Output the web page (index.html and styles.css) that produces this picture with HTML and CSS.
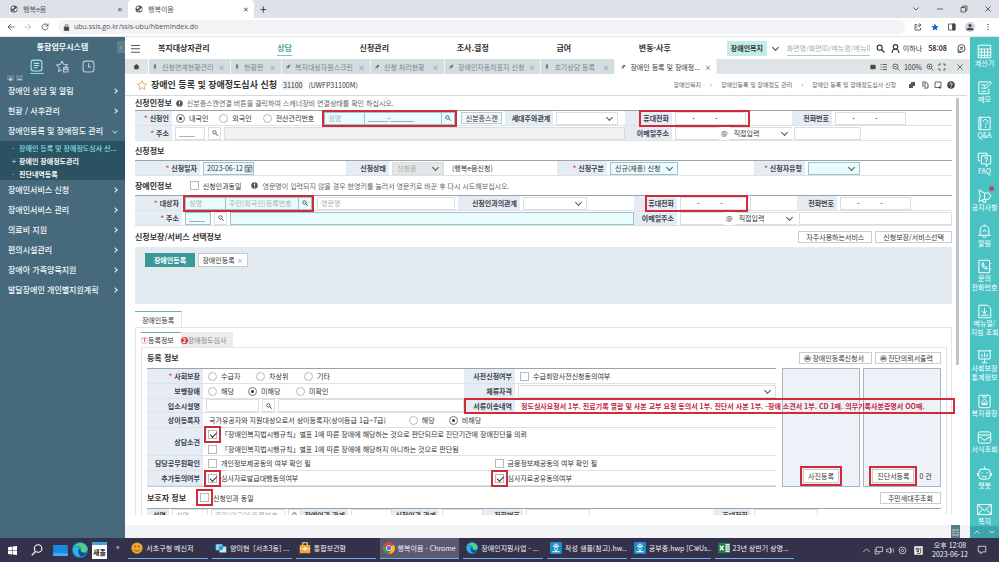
FILE: index.html
```html
<!DOCTYPE html>
<html lang="ko">
<head>
<meta charset="utf-8">
<title>행복이음</title>
<link rel="stylesheet" href="styles.css">
</head>
<body>
<svg class="defs" aria-hidden="true">
  <symbol id="globe" viewBox="0 0 16 16"><circle cx="8" cy="8" r="7" fill="#4d5156"/><path d="M3 5l3-2 3 1-2 3-3 1zM9 9l4-3 1 3-3 4-2-1zM4 11l3 0 0 3z" fill="#fff"/></symbol>
  <symbol id="search" viewBox="0 0 16 16"><circle cx="6.5" cy="6.5" r="4.5" fill="none" stroke="currentColor" stroke-width="2"/><path d="M10 10l5 5" stroke="currentColor" stroke-width="2.4"/></symbol>
  <symbol id="pin" viewBox="0 0 16 16"><path d="M5 1h6v2l-1 1v3l3 3H3l3-3V4L5 3z" fill="currentColor"/><path d="M8 10v5" stroke="currentColor" stroke-width="1.6"/></symbol>
  <symbol id="info" viewBox="0 0 16 16"><circle cx="8" cy="8" r="7.5" fill="#555"/><path d="M8 3v6M8 11v2" stroke="#fff" stroke-width="2.2"/></symbol>
  <symbol id="print" viewBox="0 0 16 16"><circle cx="8" cy="8" r="7" fill="none" stroke="#666" stroke-width="1.5"/><path d="M5 4h6v3H5zM3 7h10v4H3z" fill="#666"/></symbol>
  <symbol id="edge" viewBox="0 0 16 16"><circle cx="8" cy="8" r="8" fill="#1878c8"/><path d="M1 6C3 0 13-1 15.500 6c.5 3-2 5-5 4.500C8 10 9 8 9 7 8 3 3 3 1 6z" fill="#4fd08b"/><path d="M1 6c2-2 6-2 7 0-3 1-3 6 1 8-4 2-9-2-8-8z" fill="#2cb5e0"/><path d="M8 7c0 2 1 4 6 4-1 2-3 3-5 3-3-2-3-5-1-7z" fill="#134d8f"/></symbol>
</svg>

<header class="browser">
  <div class="tabstrip">
    <div class="btab"><svg><use href="#globe"/></svg><span>행복e음</span><button aria-label="탭 닫기">✕</button></div>
    <div class="btab on"><svg><use href="#globe"/></svg><span>행복이음</span><button aria-label="탭 닫기">✕</button></div>
    <button class="plus" aria-label="새 탭">+</button>
    <div class="wincontrols">
      <svg viewBox="0 0 16 16"><path d="M3 5l5 5 5-5"/></svg>
      <svg viewBox="0 0 16 16"><path d="M2 8h12"/></svg>
      <svg viewBox="0 0 16 16"><path d="M2 5h9v9H2zM5 5V2h9v9h-3"/></svg>
      <svg viewBox="0 0 16 16"><path d="M3 3l10 10M13 3L3 13"/></svg>
    </div>
  </div>
  <div class="toolbar">
    <svg viewBox="0 0 16 16"><path d="M15 8H2M8 2L2 8l6 6"/></svg>
    <svg class="dim" viewBox="0 0 16 16"><path d="M1 8h13M8 2l6 6-6 6"/></svg>
    <svg viewBox="0 0 16 16"><path d="M13 4.500A6 6 0 1 0 14 9M14 1v5H9"/></svg>
    <label class="omni"><svg viewBox="0 0 16 16"><path d="M3 7h10v8H3z" fill="#444"/><path d="M5 7V4a3 3 0 0 1 6 0v3"/></svg><input aria-label="주소창" value="ubu.ssis.go.kr/ssis-ubu/hbemIndex.do"></label>
    <svg viewBox="0 0 16 16"><path d="M6 3H2v11h11v-4M5 10c0-4 3-6 8-6M10 1l4 3-4 4"/></svg>
    <svg viewBox="0 0 16 16"><path class="star" d="M8 1l2.200 4.800 5 .6-3.700 3.500 1 5.100L8 12.500 3.500 15l1-5.100L.8 6.400l5-.6z"/></svg>
    <svg viewBox="0 0 16 16"><path d="M1 2h13v12H1z"/><path d="M9 2h5v12H9z" fill="#444"/></svg>
    <svg class="avatar" viewBox="0 0 16 16"><circle cx="8" cy="5.500" r="2.500" fill="#444"/><path d="M2 13c1-5 11-5 12 0z" fill="#444"/></svg>
    <svg viewBox="0 0 16 16"><path d="M8 2v2M8 7v2M8 12v2" stroke-width="2.500"/></svg>
  </div>
</header>

<div class="app">
  <aside class="side">
    <button class="fold" aria-label="메뉴 접기">‹</button>
    <h1>통합업무시스템</h1>
    <div class="modes">
      <button class="on" aria-label="메뉴"><svg viewBox="0 0 24 24"><rect x="2" y="2" width="20" height="20" rx="5"/><path d="M7 8h10M7 12h10M7 16h7"/></svg></button>
      <button aria-label="즐겨찾기"><svg viewBox="0 0 24 24"><path d="M11 2l3 6 7 1-4 4M11 2L8 8l-7 1 5 5-1 7 6-3M14 14h8v8h-8zM14 17h8"/></svg></button>
      <button aria-label="최근"><svg viewBox="0 0 24 24"><rect x="2" y="2" width="20" height="20" rx="5"/><path d="M12 6v7h5"/></svg></button>
    </div>
    <div class="expand"><button aria-label="모두 펼치기">+</button><button aria-label="모두 접기">−</button></div>
    <nav>
      <a href="#">장애인 상담 및 알림<i></i></a>
      <a href="#">현황 / 사후관리<i></i></a>
      <a href="#" class="open">장애인등록 및 장애정도 관리<i></i></a>
      <div class="sub">
        <a href="#" class="on">장애인 등록 및 장애정도심사 신...</a>
        <a href="#" class="more">장애인 장애정도관리</a>
        <a href="#">진단내역등록</a>
      </div>
      <a href="#">장애인서비스 신청<i></i></a>
      <a href="#">장애인서비스 관리<i></i></a>
      <a href="#">의료비 지원<i></i></a>
      <a href="#">편의시설관리<i></i></a>
      <a href="#">장애아 가족양육지원<i></i></a>
      <a href="#">발달장애인 개인별지원계획<i></i></a>
    </nav>
  </aside>

  <main>
    <div class="topnav">
      <button class="burger" aria-label="전체 메뉴"><svg viewBox="0 0 16 16"><path d="M0 2.500h16M0 8.500h16M0 14.500h16"/></svg></button>
      <nav><a href="#">복지대상자관리</a><a href="#" class="on">상담</a><a href="#">신청관리</a><a href="#">조사.결정</a><a href="#">급여</a><a href="#">변동·사후</a></nav>
      <div class="tools">
        <button class="badge">장애인복지</button><i class="chev"></i>
        <input class="find" aria-label="화면 검색" placeholder="화면명/화면ID/메뉴명/메뉴ID">
        <svg><use href="#search"/></svg>
        <svg viewBox="0 0 16 16"><circle cx="8" cy="5" r="4" fill="none" stroke="#333" stroke-width="2"/><path d="M2 16c0-9 12-9 12 0" fill="none" stroke="#333" stroke-width="2"/></svg>
        <span>이하나</span><b>58:08</b>
        <svg class="chat" viewBox="0 0 16 16"><circle cx="8" cy="7.500" r="6.500" fill="none" stroke="#444" stroke-width="1.600"/><path d="M2 10v5h6M5 6h6M5 9h6" fill="none" stroke="#444" stroke-width="1.600"/></svg>
      </div>
    </div>

    <div class="doctabs">
      <button class="home" aria-label="홈"><svg viewBox="0 0 16 16"><path d="M1 8l7-6 7 6h-2v6H3V8z" fill="#444"/></svg></button>
      <div class="t w1"><svg><use href="#pin"/></svg><span>신청연계현황관리</span><em>×</em></div>
      <div class="t w2"><svg><use href="#pin"/></svg><span>현황판</span><em>×</em></div>
      <div class="t w3"><svg class="tilt"><use href="#pin"/></svg><span>복지대상자원스크린</span><em>×</em></div>
      <div class="t w4"><svg class="tilt"><use href="#pin"/></svg><span>신청 처리현황</span><em>×</em></div>
      <div class="t w5"><svg class="tilt"><use href="#pin"/></svg><span>장애인자동차표지 신청</span><em>×</em></div>
      <div class="t w4"><svg><use href="#pin"/></svg><span>초기상담 등록</span><em>×</em></div>
      <div class="t w6 on"><svg class="tilt"><use href="#pin"/></svg><span>장애인 등록 및 장애정...</span><em>×</em></div>
      <div class="view">
        <svg viewBox="0 0 16 16"><path d="M2 3h12v10H2z" fill="#444"/></svg>
        <svg viewBox="0 0 16 16"><path d="M5 3h9M5 8h9M5 13h9M1 3h2M1 8h2M1 13h2"/></svg>
        <svg viewBox="0 0 16 16"><circle cx="7" cy="7" r="5"/><path d="M11 11l4 4M5 7h4"/></svg>
        <span>100%</span>
        <svg viewBox="0 0 16 16"><circle cx="7" cy="7" r="5"/><path d="M11 11l4 4M5 7h4M7 5v4"/></svg>
        <svg viewBox="0 0 16 16"><path d="M2 6V2h4M10 2h4v4M14 10v4h-4M6 14H2v-4"/></svg>
        <svg viewBox="0 0 16 16"><path d="M3 3l10 10M13 3L3 13"/></svg>
      </div>
    </div>

    <div class="titlebar">
      <svg class="fav" viewBox="0 0 16 16"><path d="M8 1l2.200 4.800 5 .6-3.700 3.500 1 5.100L8 12.500 3.500 15l1-5.100L.8 6.400l5-.6z" fill="none" stroke="#d8a35a" stroke-width="1.300"/></svg>
      <h2>장애인 등록 및 장애정도심사 신청</h2><span class="code">31100</span><span class="pid">(UWFP31100M)</span>
      <div class="crumbs"><a href="#">장애인복지</a><i>›</i><a href="#">장애인등록 및 장애정도 관리</a><i>›</i><a href="#">장애인 등록 및 장애정도심사 신청</a></div>
      <div class="acts">
        <svg viewBox="0 0 16 16"><path d="M2 6h8v8H2zM6 2h8v8h-4V6H6z" fill="#555"/></svg>
        <svg viewBox="0 0 16 16"><path d="M2 2h8l4 4v8H6M2 6h8M2 10h8" fill="none" stroke="#444" stroke-width="1.800"/></svg>
        <svg viewBox="0 0 16 16"><path d="M2 2h12v11H2zM9 13l3-2v4z" fill="none" stroke="#444" stroke-width="1.600"/></svg>
        <svg viewBox="0 0 16 16"><circle cx="8" cy="8" r="7.500" fill="#444"/><path d="M5.500 6.500c0-4 5-3 5-.5 0 2-2.500 2-2.500 4M8 11.500v2" fill="none" stroke="#fff" stroke-width="1.700"/></svg>
      </div>
    </div>

    <div class="scroller">
      <div class="page">
        <div class="head h14"><h3>신청인정보</h3><svg class="ic"><use href="#info"/></svg><small>신분증스캔연결 버튼을 클릭하여 스캐너장비 연결상태를 확인 하십시오.</small></div>
        <section class="form f1">
          <span class="lb req">신청인</span>
          <div class="fd">
            <label class="op"><input type="radio" name="who" checked>내국인</label>
            <label class="op"><input type="radio" name="who">외국인</label>
            <label class="op"><input type="radio" name="who">전산관리번호</label>
            <div class="pair mark"><input class="need nm" aria-label="성명" placeholder="성명"><input class="need grow" aria-label="등록번호" value="_____-______"><button class="glass" aria-label="검색"><svg><use href="#search"/></svg></button></div>
            <button class="btn scan">신분증스캔</button>
            <label class="lb rel" for="rel1">세대주와관계</label>
            <span class="sel s60"><select id="rel1"><option></option></select></span>
          </div>
          <div class="lb phone"><label for="hp1">휴대전화</label></div>
          <div class="fd">
            <input id="hp1" class="tel hp" value="-         -"><div class="ring r1"></div>
            <label class="lb tl" for="tel1">전화번호</label><input id="tel1" class="tel t2" value="-         -">
          </div>
          <label class="lb req" for="zip1">주소</label>
          <div class="fd"><input id="zip1" class="zip" value="____"><button class="glass box" aria-label="주소 검색"><svg><use href="#search"/></svg></button><input class="grow off" aria-label="상세 주소"></div>
          <label class="lb" for="em1">이메일주소</label>
          <div class="fd tight"><input id="em1" class="em"><span>@</span><span class="sel s60"><select aria-label="이메일 도메인"><option>직접입력</option></select></span><input class="dom1" aria-label="도메인"></div>
        </section>

        <div class="head h19"><h3>신청정보</h3></div>
        <section class="form f2">
          <label class="lb req" for="date">신청일자</label>
          <div class="fd"><span class="date"><input id="date" value="2023-06-12"><svg viewBox="0 0 16 16"><path d="M2 3h12v11H2zM2 6h12M5 1v3M11 1v3M4 9h8M4 12h8M8 6v8" fill="none" stroke="#555" stroke-width="1.200"/></svg></span></div>
          <label class="lb" for="state">신청상태</label>
          <div class="fd"><span class="sel s52 dis"><select id="state" disabled><option>신청중</option></select></span><span class="note">(행복e음신청)</span></div>
          <label class="lb req" for="kind">신청구분</label>
          <div class="fd"><span class="sel s68 need"><select id="kind"><option>신규(재증) 신청</option></select></span></div>
          <label class="lb req" for="type">신청자유형</label>
          <div class="fd"><span class="sel s52 need"><select id="type"><option></option></select></span></div>
        </section>

        <div class="head h19"><h3>장애인정보</h3><label class="op same"><input type="checkbox">신청인과동일</label><svg class="ic"><use href="#info"/></svg><small>영문명이 입력되지 않을 경우 한영키를 눌러서 영문키로 바꾼 후 다시 시도해보십시오.</small></div>
        <section class="form f3">
          <span class="lb req">대상자</span>
          <div class="fd">
            <div class="pair mark p3"><input class="need nm" aria-label="성명" placeholder="성명"><input class="need grow" aria-label="주민등록번호" placeholder="주민(외국인)등록번호"><button class="glass" aria-label="검색"><svg><use href="#search"/></svg></button></div>
            <input class="eng" aria-label="영문명" placeholder="영문명">
            <label class="lb rel3" for="rel3">신청인과의관계</label><span class="sel s64"><select id="rel3"><option></option></select></span>
          </div>
          <div class="lb phone"><label for="hp3">휴대전화</label></div>
          <div class="fd"><input id="hp3" class="tel hp" value="-         -"><div class="ring r3"></div>
            <label class="lb tl" for="tel3">전화번호</label><input id="tel3" class="tel t2" value="-         -"></div>
          <label class="lb req" for="zip3">주소</label>
          <div class="fd"><input id="zip3" class="zip need" value="____"><button class="glass box" aria-label="주소 검색"><svg><use href="#search"/></svg></button><input class="grow need" aria-label="상세 주소"></div>
          <label class="lb" for="em3">이메일주소</label>
          <div class="fd tight"><input id="em3" class="em"><span>@</span><span class="sel s60"><select aria-label="이메일 도메인"><option>직접입력</option></select></span><input class="grow" aria-label="도메인"></div>
        </section>

        <div class="head h21"><h3>신청보장/서비스 선택정보</h3><div class="right"><button class="btn">자주사용하는서비스</button><button class="btn">신청보장/서비스선택</button></div></div>
        <div class="picked"><button class="main">장애인등록</button><button class="chip">장애인등록 <em>×</em></button></div>

        <div class="outer-tabs"><button>장애인등록</button></div>
        <div class="outer">
          <div class="inner-tabs"><button class="on"><i>①</i>등록정보</button><button><i class="fill">2</i>장애정도심사</button></div>
          <div class="inner">
            <div class="head h20"><h3>등록 정보</h3><div class="right"><button class="btn"><svg><use href="#print"/></svg>장애인등록신청서</button><button class="btn"><svg><use href="#print"/></svg>진단의뢰서출력</button></div></div>
            <div class="split">
              <section class="form reg">
                <span class="lb req">사회보장</span>
                <div class="fd"><label class="op w"><input type="radio" name="a">수급자</label><label class="op w"><input type="radio" name="a">차상위</label><label class="op"><input type="radio" name="a">기타</label></div>
                <span class="lb">사전신청여부</span>
                <div class="fd"><label class="op"><input type="checkbox">수급희망사전신청동의여부</label></div>
                <span class="lb">보행장애</span>
                <div class="fd"><label class="op v"><input type="radio" name="b">해당</label><label class="op w"><input type="radio" name="b" checked>미해당</label><label class="op"><input type="radio" name="b">미확인</label></div>
                <label class="lb" for="stay">체류자격</label>
                <div class="fd"><span class="sel grow"><select id="stay"><option></option></select></span></div>
                <label class="lb" for="fac">입소시설명</label>
                <div class="fd"><input id="fac" class="fac"><button class="glass box" aria-label="시설 검색"><svg><use href="#search"/></svg></button><input class="grow" aria-label="시설명"></div>
                <span class="lb">서류이송내역</span>
                <div class="fd"><b class="sent">정도심사요청서 1부. 진료기록 열람 및 사본 교부 요청 동의서 1부. 진단서 사본 1부. -장애 소견서 1부. CD 1매. 의무기록사본증명서 OO매.</b><div class="ring rs"></div></div>
                <span class="lb">상이등록자</span>
                <div class="fd all"><span class="vet">국가유공자와 지원대상으로서 상이등록자(상이등급 1급~7급)</span><label class="op v"><input type="radio" name="c">해당</label><label class="op"><input type="radio" name="c" checked>비해당</label></div>
                <span class="lb">상담소견</span>
                <div class="fd all two"><label class="op"><input class="hot" type="checkbox" checked>「장애인복지법시행규칙」별표 1에 따른 장애에 해당하는 것으로 판단되므로 진단기관에 장애진단을 의뢰</label><label class="op"><input type="checkbox">「장애인복지법시행규칙」별표 1에 따른 장애에 해당하지 아니하는 것으로 판단됨</label></div>
                <span class="lb">담당공무원확인</span>
                <div class="fd all halves"><label class="op"><input type="checkbox">개인정보제공동의 여부 확인 필</label><label class="op"><input type="checkbox">금융정보제공동의 여부 확인 필</label></div>
                <span class="lb">추가동의여부</span>
                <div class="fd all halves"><label class="op"><input class="hot" type="checkbox" checked>심사자료발급대행동의여부</label><label class="op"><input class="hot" type="checkbox" checked>심사자료공유동의여부</label></div>
              </section>
              <div class="drop"><button class="btn mark">사진등록</button></div>
              <div class="drop"><button class="btn mark">진단서등록</button><span>0 건</span></div>
            </div>
            <div class="head h21"><h3>보호자 정보</h3><label class="op guard"><input class="hot" type="checkbox">신청인과 동일</label><div class="right"><button class="btn">주민세대주조회</button></div></div>
            <section class="form care">
              <span class="lb">성명</span><div class="fd"><input class="nm" aria-label="보호자 성명" placeholder="성명"><input class="grow" aria-label="보호자 등록번호" placeholder="주민(외국인)등록번호"><button class="glass" aria-label="검색"><svg><use href="#search"/></svg></button></div>
              <label class="lb" for="g1">장애인과 관계</label><div class="fd"><input class="grow" id="g1"></div>
              <label class="lb" for="g2">신청인과 관계</label><div class="fd"><input class="grow" id="g2"></div>
              <label class="lb" for="g3">전화번호</label><div class="fd"><input class="c64" id="g3"></div>
              <label class="lb" for="g4">휴대전화</label><div class="fd"><input class="c64" id="g4"></div>
            </section>
          </div>
        </div>
      </div>
      <div class="track"><div class="thumb"></div></div>
    </div>
    <div class="foot"><button aria-label="창 목록">▤</button></div>
  </main>

  <aside class="rail">
    <div class="items">
      <a href="#"><svg viewBox="0 0 24 24"><path d="M2 2h20v20H2zM2 8h20M7 8v14M12 8v14M17 8v14M2 13h20M2 18h20"/></svg>계산기</a>
      <a href="#"><svg viewBox="0 0 24 24"><path d="M18 3H3v19h16v-8M7 8h6M7 13h4M7 18h8M12 14l1-4 8-8 2 3-8 8z"/></svg>메모</a>
      <a href="#"><svg viewBox="0 0 24 24"><path d="M3 2h18v20H3zM6 2v20M10 9c0-5 7-4 7 0 0 2-3 2-3 5M14 16v3"/></svg>Q&amp;A</a>
      <a href="#"><svg viewBox="0 0 24 24"><path d="M5 14H2V2h14v4M7 6h15v13h-4l-3 4v-4H7zM12 11c0-3 5-3 5 0l-2 2v3"/></svg>FAQ</a>
      <a href="#" class="new"><svg viewBox="0 0 24 24"><path d="M3 3l9 5h7l3 5-3 5h-7l-9 4 2-9zM12 8v10M9 18l1 5h4v-5"/></svg>공지사항</a>
      <a href="#"><svg viewBox="0 0 24 24"><path d="M2 18h20M5 18v-8c0-10 14-10 14 0v8M9 18c0 5 6 5 6 0M12 1v3M9 13l3-4 3 4"/></svg>알림</a>
      <a href="#"><svg viewBox="0 0 24 24"><path d="M3 2h17v20H3zM20 7h3M20 16h3"/><path d="M8 7c0 6 3 9 8 9v-3l-3-1-1 1-2-3 1-1-1-3z"/></svg>문의<br>전화번호</a>
      <a href="#"><svg viewBox="0 0 24 24"><path d="M3 2h14l5 5v15H3zM12 6v9M8 11l4 4 4-4M7 18h11"/></svg>메뉴얼/<br>지침 조회</a>
      <a href="#"><svg viewBox="0 0 24 24"><path d="M1 3h22M3 3v13h18V3M12 16v6M8 22h8M8 8v5M12 6v7M16 8v5"/></svg>사회보장<br>통계정보</a>
      <a href="#"><svg viewBox="0 0 24 24"><rect x="3" y="2" width="18" height="20" rx="2"/><path d="M8 5h8M12 8l-4 4v5h8v-5zM11 17v-3h2v3"/></svg>복지광장</a>
      <a href="#"><svg viewBox="0 0 24 24"><rect x="2" y="3" width="20" height="18" rx="3"/><path d="M2 8h20M2 12h5l3 4h4l3-4h5"/></svg>서식조회</a>
      <a href="#"><svg viewBox="0 0 24 24"><rect x="3" y="5" width="18" height="16" rx="5"/><path d="M12 1v4M1 11v5M23 11v5M8 10v2M16 10v2M8 16c2 2 6 2 8 0"/></svg>챗봇</a>
      <a href="#"><svg viewBox="0 0 24 24"><path d="M1 4h22v16H1zM1 4l11 10L23 4M1 20l8-8M23 20l-8-8"/></svg>쪽지</a>
    </div>
    <div class="updown"><button aria-label="위로"><svg viewBox="0 0 16 16"><path d="M3 11l5-5 5 5"/></svg></button><button aria-label="아래로"><svg viewBox="0 0 16 16"><path d="M3 5l5 5 5-5"/></svg></button></div>
  </aside>
</div>

<footer class="taskbar">
  <svg class="win" viewBox="0 0 16 16"><path d="M0 2l7-1v6.500H0zM8 1l8-1v7.500H8zM0 8.500h7V15l-7-1zM8 8.500h8V16l-8-1z" fill="#fff"/></svg>
  <svg class="q" viewBox="0 0 16 16"><circle cx="9.500" cy="6" r="5" fill="none" stroke="#fff" stroke-width="1.500"/><path d="M6 10l-5 5" stroke="#fff" stroke-width="1.500"/></svg>
  <svg class="desk" viewBox="0 0 16 12"><path d="M0 0h16v12H0z" fill="#1b8be0"/><path d="M0 9h16v3H0z" fill="#45aef5"/></svg>
  <svg class="e"><use href="#edge"/></svg>
  <span class="sae">새올</span><span class="mo">»</span>
  <div class="tasks">
    <button><svg viewBox="0 0 16 16"><circle cx="8" cy="8" r="7.500" fill="#eda52e"/><circle cx="5.500" cy="6" r="1" fill="#543"/><circle cx="10.500" cy="6" r="1" fill="#543"/><path d="M4 10c2 3 6 3 8 0" stroke="#543" fill="none"/></svg><span>서초구청 메신저</span></button>
    <button><svg viewBox="0 0 16 16"><path d="M1 3h9v8H1z" fill="#7fd6f2"/><path d="M6 6h9v8H6z" fill="#bfeaf7"/><circle cx="8" cy="8" r="3" fill="#2b9fc4"/></svg><span>양미현&nbsp; [서초3동] ...</span></button>
    <button><svg viewBox="0 0 16 16"><path d="M1 4h14v11H1z" fill="#eda83c"/><path d="M5 4V1h6v3M1 9h14" stroke="#fbe09b" fill="none" stroke-width="1.500"/><path d="M6 7h4v4H6z" fill="#fff2c9"/></svg><span>통합보관함</span></button>
    <button class="on"><svg viewBox="0 0 16 16"><circle cx="8" cy="8" r="8" fill="#e34133"/><path d="M1 4l4 6 3 6A8 8 0 0 1 1 4z" fill="#30a753"/><path d="M8 16l4-7V4.500h3.200A8 8 0 0 1 8 16z" fill="#fbbd0a"/><circle cx="8" cy="8" r="3.800" fill="#fff"/><circle cx="8" cy="8" r="3" fill="#3f80ee"/></svg><span>행복이음 - Chrome</span></button>
    <button><svg><use href="#edge"/></svg><span>장애인지원사업 - ...</span></button>
    <button><svg viewBox="0 0 16 16"><rect width="16" height="16" rx="2" fill="#1d8fc6"/><path d="M6 3h4M4 5.500h8M8 11v2M3 13h10" stroke="#fff" stroke-width="1.400"/><circle cx="8" cy="9" r="2" fill="none" stroke="#fff"/></svg><span>작성 샘플(참고).hw...</span></button>
    <button><svg viewBox="0 0 16 16"><rect width="16" height="16" rx="2" fill="#1d8fc6"/><path d="M6 3h4M4 5.500h8M8 11v2M3 13h10" stroke="#fff" stroke-width="1.400"/><circle cx="8" cy="9" r="2" fill="none" stroke="#fff"/></svg><span>공부중.hwp [C:₩Us...</span></button>
    <button><svg viewBox="0 0 16 16"><path d="M8 2h8v12H8z" fill="#e8f3ea" stroke="#1d7f45"/><path d="M0 1h10v14H0z" fill="#1d7f45"/><path d="M2.500 5l5 6M7.500 5l-5 6" stroke="#fff" stroke-width="1.600"/><path d="M11 5h4M11 8h4M11 11h4" stroke="#1d7f45"/></svg><span>23년 상반기 상명...</span></button>
  </div>
  <div class="tray">
    <svg viewBox="0 0 16 16"><path d="M2 11l6-6 6 6"/></svg>
    <svg viewBox="0 0 16 16"><path d="M4 2h11v8H4zM2 5v9h6M9 10v4"/></svg>
    <svg viewBox="0 0 16 16"><path d="M1 6h3l4-3v10l-4-3H1zM10 6v4M12 4c2 2 2 6 0 8"/></svg>
    <svg viewBox="0 0 16 16"><circle cx="8" cy="8" r="6"/><circle cx="8" cy="8" r="2"/></svg>
    <svg class="ime" viewBox="0 0 16 16"><path d="M1 1h14v14H1z" fill="#fff"/><path d="M4 4h5v3H4zM4 10h5M7 7v3M12 3v10M5 13h6" stroke="#222"/></svg>
  </div>
  <div class="clock">오후 12:08<br>2023-06-12</div>
  <svg class="bell" viewBox="0 0 16 16"><path d="M2 2h12v9H9l-3 3v-3H2z" fill="none" stroke="#ddd" stroke-width="1.400"/></svg>
</footer>
</body>
</html>
```
FILE: styles.css
```css
* { box-sizing: border-box; }
html, body { height: 100%; margin: 0; }
body {
  display: flex; flex-direction: column; overflow: hidden;
  font: 7px/10px "Noto Sans CJK KR", "Noto Sans", sans-serif; color: #333; background: #fff;
  white-space: nowrap;
}
button, input, select { font: inherit; color: inherit; margin: 0; padding: 0; border: 0; background: none; border-radius: 0; min-width: 0; outline: 0; }
a { color: inherit; text-decoration: none; }
h1, h2, h3 { margin: 0; font-size: 8px; font-weight: 700; }
i, em { font-style: normal; }
svg { display: block; flex: none; width: 9px; height: 9px; }
.defs { position: absolute; width: 0; height: 0; }
small { font-size: 7px; color: #666; }

/* browser frame */
.browser { flex: none; }
.tabstrip { height: 18px; display: flex; align-items: center; background: #dee1e8; }
.btab { width: 128px; height: 18px; padding: 0 5px 0 10px; display: flex; align-items: center; gap: 5px; color: #555; }
.btab span { flex: 1; }
.btab.on { background: #fff; width: 126px; padding-left: 7px; border-radius: 4px 4px 0 0; }
.btab svg { width: 8px; height: 8px; }
.plus { margin-left: 6px; font-size: 12px; }
.wincontrols { margin-left: auto; display: flex; gap: 16px; padding-right: 7px; }
.wincontrols svg, .toolbar svg { width: 8px; height: 8px; fill: none; stroke: #444; stroke-width: 1.6; }
.toolbar { height: 19px; display: flex; align-items: center; gap: 9px; padding: 0 7px; border-bottom: 1px solid #e3e5e8; }
.toolbar .dim { stroke: #bbb; }
.omni { flex: 1; height: 14px; display: flex; align-items: center; gap: 4px; padding-left: 5px; border-radius: 7px; background: #f1f3f5; }
.omni svg { width: 7px; height: 7px; }
.omni input { flex: 1; font-family: "Open Sans", sans-serif; color: #555; }
.toolbar .star { fill: #1a62d6; stroke: none; }
.toolbar .avatar { width: 10px; height: 10px; border-radius: 50%; background: #cdd3dc; stroke: none; }

.app { flex: 1; min-height: 0; display: flex; }

/* left menu */
.side { position: relative; flex: none; width: 125px; background: #466a7c; color: #f2f7f9; padding-top: 5px; font-size: 8px; }
.side h1 { text-align: center; }
.fold { position: absolute; right: 0; top: 4px; width: 8px; height: 12px; background: #5f7f8e; color: #b8cbd4; }
.modes { display: flex; justify-content: center; gap: 12px; padding-top: 5px; margin-top: 1px; }
.modes button { width: 14px; height: 16px; opacity: .65; }
.modes .on { opacity: 1; border-bottom: 1px solid #7fd6de; }
.modes svg { width: 13px; height: 13px; margin: auto; fill: none; stroke: #fff; stroke-width: 2; }
.modes .on svg { stroke: #a8ecef; }
.expand { display: flex; gap: 2px; padding: 1px 7px 0; height: 7px; }
.expand button { width: 7px; height: 6px; line-height: 5px; background: #64838f; }
.side nav a { display: flex; align-items: center; justify-content: space-between; height: 20px; padding: 0 8px; font-weight: 500; }
.side nav i { width: 4px; height: 4px; border: solid #e8f0f3; border-width: 1px 1px 0 0; transform: rotate(45deg); }
.side nav .open i { transform: rotate(135deg); border-color: #7fd6de; }
.side nav .sub { background: #2c5161; font-size: 7px; }
.side nav .sub a { height: 13px; padding: 0 0 0 12px; justify-content: flex-start; gap: 4px; font-weight: 700; }
.sub a::before { content: "·"; width: 3px; color: #9cc; }
.sub .more::before { content: "+"; }
.side nav .sub .on { color: #7fe3e6; font-weight: 500; }

/* top navigation */
main { flex: 1; min-width: 0; display: flex; flex-direction: column; }
.topnav { flex: none; height: 22px; display: flex; align-items: center; padding: 0 4px 0 6px; font-size: 8px; }
.burger svg { width: 9px; height: 9px; stroke: #555; stroke-width: 1.8; }
.topnav nav { flex: 1; display: flex; justify-content: space-between; margin: 0 56px 0 18px; font-weight: 700; }
.topnav nav a { padding: 2px 0; border-bottom: 1px solid transparent; }
.topnav nav .on { color: #4ba69c; border-color: #7cc7bd; }
.tools { display: flex; align-items: center; gap: 6px; font-size: 7px; }
.tools > svg { color: #333; }
.badge { height: 15px; width: 40px; background: #c4ece8; font-weight: 700; }
.chev { width: 5px; height: 5px; margin: 0 3px 2px 0; border: solid #444; border-width: 0 1px 1px 0; transform: rotate(45deg); }
.find { width: 83px; height: 16px; border-bottom: 1px solid #9cd3cf; }
::placeholder { color: #a9adb0; opacity: 1; }
.tools span { margin-left: -3px; }
.chat { margin-left: 4px; }

.doctabs { flex: none; height: 15px; display: flex; background: #dfe5e7; }
.home { width: 24px; display: flex; align-items: center; justify-content: center; border-right: 1px solid #fff; }
.home svg { width: 7px; }
.t { display: flex; align-items: center; gap: 4px; padding: 0 5px 0 3px; background: #d3dcde; border-right: 1px solid #eef2f3; color: #7d868a; }
.t svg { width: 6px; height: 6px; color: #666; }
.tilt { transform: rotate(45deg); }
.t span { flex: 1; overflow: hidden; }
.w1 { flex: 0 0 82px; } .w2 { flex: 0 0 51px; } .w3 { flex: 0 0 89px; } .w4 { flex: 0 0 74px; } .w5 { flex: 0 0 95px; } .w6 { flex: 0 0 102px; }
.t.on { background: #fff; color: #333; padding-left: 5px; }
.view { margin-left: auto; display: flex; align-items: center; gap: 4px; padding-right: 6px; }
.view svg { width: 8px; height: 8px; fill: none; stroke: #444; stroke-width: 1.6; }
.view svg:first-child { width: 6px; height: 6px; }
.view svg:last-child { margin-left: 6px; }

.titlebar { flex: none; height: 22px; display: flex; align-items: center; padding: 0 12px 0 12px; margin-right: 3px; border-bottom: 1px solid #d5d9db; }
.titlebar h2 { font-size: 9px; margin-left: 4px; }
.fav { width: 10px; height: 10px; }
.code { margin: 0 5px; padding: 0 1px; background: #eceff1; }
.crumbs { margin-left: auto; display: flex; gap: 9px; font-size: 6px; color: #666; }
.acts { display: flex; gap: 5px; margin-left: 12px; }
.acts svg { width: 8px; height: 8px; }

/* scrolling page */
.scroller { flex: 1; min-height: 0; display: flex; overflow: hidden; margin-bottom: 10px; }
.page { flex: 1; min-width: 0; padding-left: 10px; }
.track { flex: none; width: 18px; padding: 2px 11px 0 4px; }
.thumb { height: 267px; background: #bcc4cc; border-radius: 1px; }
.foot { flex: none; height: 13px; background: #f2f3f4; padding-right: 10px; text-align: right; }
.foot button { width: 9px; height: 13px; background: #5a7c8a; color: #fff; }

.head { display: flex; align-items: center; gap: 4px; }
.h14 { height: 14px; } .h19 { height: 19px; } .h20 { height: 20px; } .h21 { height: 21px; }
.ic { width: 7px; height: 7px; }
.right { margin-left: auto; display: flex; gap: 3px; }
.btn { height: 12px; padding: 0 7px; border: 1px solid #c9cdd0; background: #fff; display: flex; align-items: center; gap: 1px; line-height: 8px; }
.btn svg { width: 7px; height: 7px; margin-left: -3px; }

.form { display: grid; border-top: 1px solid #9aa3a7; }
.f1 { grid-template-columns: 37px 453fr 47px 280fr; grid-auto-rows: 15px; }
.f2 { grid-template-columns: 65px 146fr 43px 168fr 50px 147fr 51px 147fr; grid-auto-rows: 15px; }
.f3 { grid-template-columns: 47px 452fr 43px 275fr; grid-auto-rows: 15px; }
.reg { flex: 1; border-bottom: 1px solid #c5cbce; grid-template-columns: 56px 261fr 51px 261fr; grid-template-rows: 15px 15px 14px 15px 28px 15px 15px; }
.care { grid-template-columns: 22px 132fr 47px 44fr 47px 44fr 40px 190fr 38px 190fr; grid-auto-rows: 12px; }
.lb { display: flex; align-items: center; justify-content: flex-end; padding-right: 3px; background: #e5ecf3; font-weight: 700; color: #3b4248; }
.form > * { border-bottom: 1px solid #dde2e5; }
.req::before { content: "*"; color: #e05050; margin-right: 2px; }
.fd { position: relative; display: flex; align-items: center; gap: 3px; padding-left: 3px; min-width: 0; }
.fd input:not([type]), .sel, .date { height: 13px; border: 1px solid #d9dee1; background: #fff; }
.fd input:not([type]) { padding-left: 3px; }
.fd .need, .fd input.need:not([type]), .date { background: #e9fbfd; border-color: #9fc3cc; }
.fd input.off:not([type]) { background: #f1f2f3; }
.grow { flex: 1; }
.op { display: flex; align-items: center; gap: 4px; }
.fd > .op { margin-left: 1px; margin-right: 7px; }
input[type=radio], input[type=checkbox] { appearance: none; position: relative; flex: none; width: 9px; height: 9px; border: 1px solid #b5babd; background: #fff; }
input[type=radio] { border-radius: 50%; }
input[type=radio]:checked { border-color: #777; }
input[type=radio]:checked::after { content: ""; position: absolute; inset: 2px; border-radius: 50%; background: #333; }
input[type=checkbox]:checked::after { content: ""; position: absolute; left: 1px; top: 1px; width: 6px; height: 3px; border: solid #333; border-width: 0 0 1px 1px; transform: rotate(-45deg); }
.mark { outline: 2px solid #cf2b38; outline-offset: 1px; }
input[type=checkbox].hot { outline: 2px solid #cf2b38; outline-offset: 2px; }
.pair { display: flex; align-items: center; width: 131px; background: #e9fbfd; outline-offset: 0; }
.pair .nm { width: 41px; }
.pair.p3 { width: 127px; margin: 0 2px 0 0; }
.pair .nm + input { border-left: 0; }
.f1 .pair { margin-right: 3px; }
.glass { width: 13px; height: 13px; display: flex; align-items: center; justify-content: center; border: 1px solid #d9dee1; background: #fff; }
.pair .glass { border-color: #9fc3cc; border-left: 0; background: #e9fbfd; }
.glass svg { width: 6px; height: 6px; }
.scan { border-color: #b7cdd6; background: #f0f6f9; padding: 0; width: 41px; justify-content: center; }
.rel { height: 14px; width: 48px; }
.rel3 { height: 14px; width: 62px; }
.fd input.eng:not([type]) { width: 138px; }
.sel { position: relative; display: flex; }
.sel select { appearance: none; width: 100%; height: 100%; padding-left: 4px; line-height: 10px; }
.sel::after { content: ""; position: absolute; right: 5px; top: 2px; width: 4px; height: 4px; border: solid #555; border-width: 0 1px 1px 0; transform: rotate(45deg); pointer-events: none; }
.s52 { width: 52px; } .s60 { width: 62px; } .s64 { width: 64px; } .s68 { width: 68px; }
.dis { background: #e5e6e7; color: #aaa; }
.sel select:disabled { color: #aaa; opacity: 1; }
.note { margin-left: 5px; }
.fd input.tel:not([type]) { width: 71px; padding-left: 16px; white-space: pre; font-size: 8px; }
.tl { height: 14px; width: 40px; margin-left: 43px; }
.fd input.zip:not([type]) { width: 30px; }
.f3 .fd input.zip:not([type]) { width: 26px; }
.tight { gap: 2px; }
.fd input.em:not([type]) { width: 44px; border-right: 0; }
.tight .sel { border-left: 0; border-right: 0; }
.fd input.dom1:not([type]) { width: 67px; }
.ring { position: absolute; border: 2px solid #cf2b38; pointer-events: none; z-index: 2; }
.ring.r1 { left: -33px; width: 111px; top: -1px; height: 17px; }
.ring.r3 { left: -32px; width: 103px; top: -1px; height: 17px; }
.ring.rs { left: -51px; width: 491px; top: -1px; height: 16px; }
.date { display: flex; align-items: center; width: 51px; }
.fd .date input:not([type]) { flex: 1; height: 11px; border: 0; background: none; }
.same { margin: 0 6px 0 14px; }

.picked { height: 57px; display: flex; align-items: flex-start; gap: 3px; padding: 6px 10px; background: #e3ebf1; }
.picked button { height: 14px; width: 50px; line-height: 12px; }
.picked .main { background: #399a97; color: #fff; font-weight: 700; }
.picked .chip { border: 1px solid #c9cdd0; background: #fff; }
.chip em { color: #888; }

.outer-tabs { margin-top: 7px; height: 16px; }
.outer-tabs button { width: 47px; height: 16px; border-top: 1px solid #6bb8a8; border-right: 1px solid #e0e4e6; }
.outer { border: solid #e3e6e8; border-width: 1px 1px 0; padding: 4px 4px 0 5px; }
.inner-tabs { display: flex; height: 15px; }
.inner-tabs button { border-top: 1px solid transparent; padding-right: 7px; display: flex; align-items: center; background: #ececee; color: #888; }
.inner-tabs .on { background: #fff; color: #333; border-color: #6bb8a8; }
.inner-tabs i { color: #d33; font-weight: 700; }
.inner-tabs .fill { width: 7px; height: 7px; border-radius: 50%; background: #d0393d; color: #fff; font-size: 6px; line-height: 7px; }
.inner { border: solid #e3e6e8; border-width: 1px 1px 0; padding: 0 5px; }
.split { display: flex; gap: 3px; }
.split .reg { margin-right: 3px; }
.all { grid-column: span 3; }
.two { flex-direction: column; align-items: flex-start; justify-content: space-around; }
.halves { display: grid; grid-template-columns: 1fr 1fr; }
.reg .op { margin-left: 2px; }
.reg .w { width: 36px; }
.reg .v { width: 28px; }
.fd input.fac:not([type]) { width: 53px; }
.vet { margin: 0 18px 0 3px; }
.sent { position: relative; z-index: 2; padding-left: 3px; color: #c4283a; }
.drop { flex: none; width: 78px; display: flex; align-items: flex-end; justify-content: center; gap: 5px; padding-bottom: 3px; background: #edf2f8; border: 1px solid #aab5be; line-height: 14px; }
.drop .btn { height: 14px; padding: 0 4px; }
.guard { margin-left: 10px; }
.care .fd input:not([type]), .care .glass { height: 11px; }
.fd input.c64:not([type]) { width: 64px; }
.care .nm { width: 36px; }

/* right rail */
.rail { flex: none; width: 29px; background: #49c2c4; color: #fff; display: flex; flex-direction: column; }
.items { flex: 1; min-height: 0; display: flex; flex-direction: column; justify-content: space-between; padding-top: 7px; }
.items a { position: relative; display: block; text-align: center; line-height: 9px; }
.items svg { width: 15px; height: 15px; margin: 0 auto; fill: none; stroke: #fff; stroke-width: 1.6; }
.new::after { content: ""; position: absolute; top: -2px; right: 5px; width: 5px; height: 5px; border-radius: 50%; background: #b84a62; }
.updown { flex: none; height: 12px; display: flex; align-items: center; justify-content: space-around; background: #3ba5ab; }
.updown svg { fill: none; stroke: #fff; stroke-width: 1.5; width: 8px; height: 8px; }

/* taskbar */
.taskbar { flex: none; height: 24px; display: flex; align-items: center; background: #33324a; color: #f2f2f6; padding: 0 12px 0 8px; }
.q { width: 12px; height: 12px; margin-left: 14px; }
.desk { width: 15px; height: 11px; margin-left: 10px; }
.e { width: 16px; height: 16px; margin-left: 4px; }
.sae { width: 15px; height: 17px; margin-left: 4px; background: #fff; color: #222; font-weight: 700; line-height: 14px; text-align: center; border-top: 3px solid #3fa6dc; }
.mo { margin: 0 9px 8px; }
.tasks { flex: 1; display: flex; gap: 4px; height: 24px; max-width: 666px; }
.tasks button { flex: 1; overflow: hidden; display: flex; align-items: center; gap: 3px; height: 21px; padding: 0 3px; border-bottom: 1px solid #6fb0ea; }
.tasks .on { background: #5b5a70; }
.tasks svg { width: 12px; height: 12px; }
.tray { margin-left: auto; display: flex; gap: 3px; }
.tray svg { width: 9px; height: 9px; fill: none; stroke: #ddd; stroke-width: 1.4; }
.tray .ime { margin-left: 4px; }
.clock { margin: 0 9px 0 9px; text-align: center; line-height: 9px; }
.bell { width: 10px; height: 10px; }
```
